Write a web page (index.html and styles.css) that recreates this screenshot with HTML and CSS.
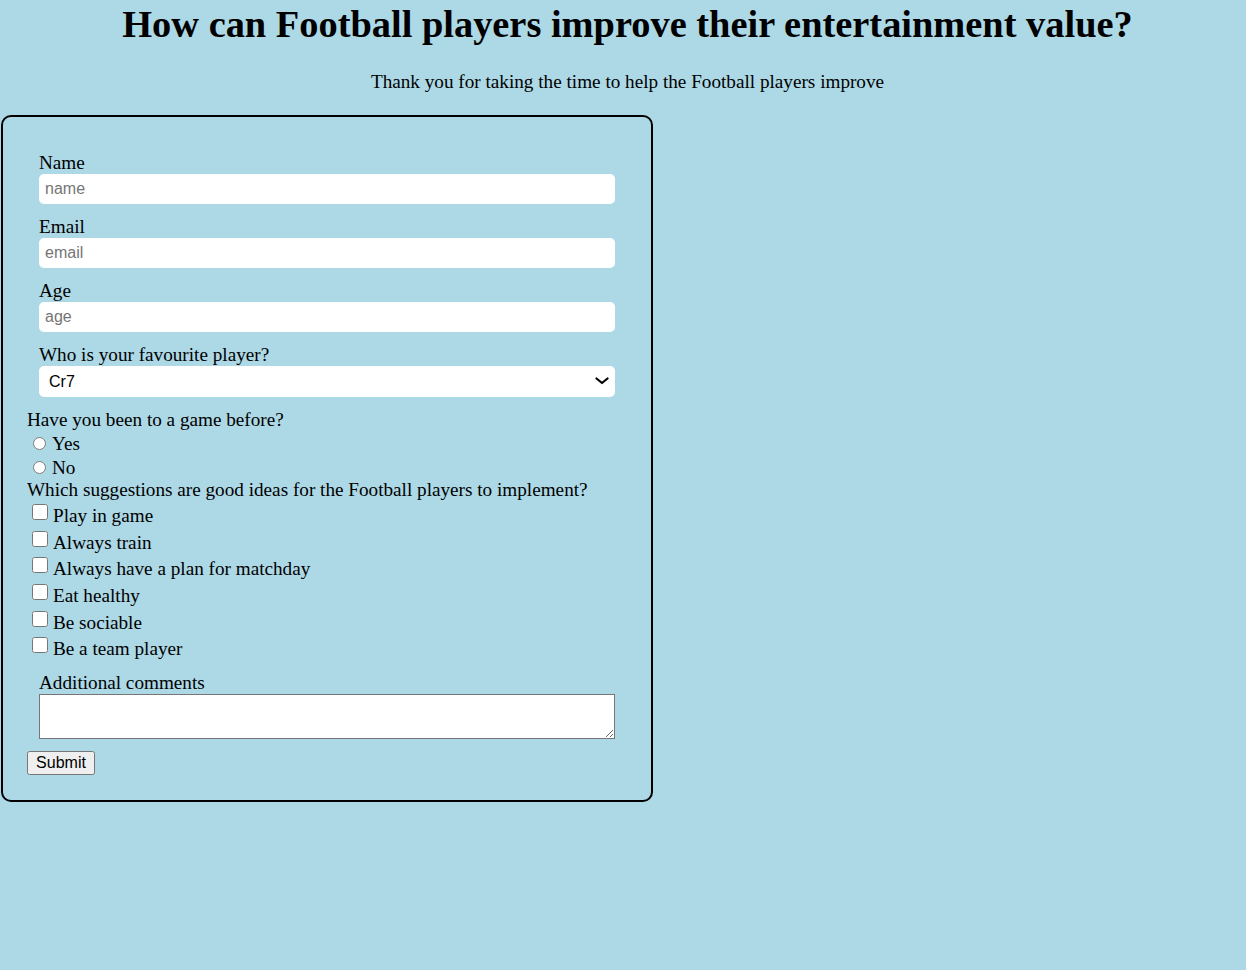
FILE: index.html
```html
<!DOCTYPE html>
<html>
<head>
<meta charset="utf-8">
<link rel="stylesheet" href="styles.css">
</head>
<body>
<h1 class="title">How can Football players improve their entertainment value?</h1>
<p class="intro">Thank you for taking the time to help the Football players improve</p>
<form class="survey">
  <div class="field">
    <label class="field-label" for="name">Name</label>
    <input class="text-input" id="name" type="text" placeholder="name">
  </div>
  <div class="field">
    <label class="field-label" for="email">Email</label>
    <input class="text-input" id="email" type="email" placeholder="email">
  </div>
  <div class="field">
    <label class="field-label" for="age">Age</label>
    <input class="text-input" id="age" type="number" placeholder="age">
  </div>
  <div class="field">
    <label class="field-label" for="player">Who is your favourite player?</label>
    <div class="select-wrap">
      <select class="select-input" id="player">
        <option>Cr7</option>
        <option>Messi</option>
      </select>
      <svg class="chevron" width="14" height="8" viewBox="0 0 14 8"><path d="M1.5 1.5 L7 6 L12.5 1.5" fill="none" stroke="#000" stroke-width="2.2" stroke-linecap="round" stroke-linejoin="round"/></svg>
    </div>
  </div>
  <div class="question">Have you been to a game before?</div>
  <div class="radio-row"><input class="radio" type="radio" name="game" id="yes"><label for="yes">Yes</label></div>
  <div class="radio-row"><input class="radio" type="radio" name="game" id="no"><label for="no">No</label></div>
  <div class="question">Which suggestions are good ideas for the Football players to implement?</div>
  <div class="checks">
    <div class="check-row"><input class="check" type="checkbox" id="c1"><label for="c1">Play in game</label></div>
    <div class="check-row"><input class="check" type="checkbox" id="c2"><label for="c2">Always train</label></div>
    <div class="check-row"><input class="check" type="checkbox" id="c3"><label for="c3">Always have a plan for matchday</label></div>
    <div class="check-row"><input class="check" type="checkbox" id="c4"><label for="c4">Eat healthy</label></div>
    <div class="check-row"><input class="check" type="checkbox" id="c5"><label for="c5">Be sociable</label></div>
    <div class="check-row"><input class="check" type="checkbox" id="c6"><label for="c6">Be a team player</label></div>
  </div>
  <div class="field comments">
    <label class="field-label" for="comments">Additional comments</label>
    <textarea class="textarea" id="comments"></textarea>
  </div>
  <button class="submit" type="submit">Submit</button>
</form>
</body>
</html>
```
FILE: styles.css
```css
html, body {
  margin: 0;
  padding: 0;
}
body {
  background: #add8e6;
  font-family: "Liberation Serif", "Times New Roman", serif;
  font-size: 19.2px;
  line-height: 22px;
  color: #000;
}
.title {
  margin: 0;
  padding: 2px 0 0 9px;
  text-align: center;
  font-size: 38.4px;
  line-height: 44px;
  font-weight: bold;
}
.intro {
  text-align: center;
  margin: 25px 0 22px;
  padding-left: 9px;
  line-height: 22px;
}
.survey {
  box-sizing: border-box;
  width: 652px;
  margin: 0 0 0 1px;
  border: 2px solid #000;
  border-radius: 10px;
  padding: 35px 24px 25px 24px;
}
.field {
  padding-left: 12px;
  margin-bottom: 12px;
  display: flex;
  flex-direction: column;
  align-items: flex-start;
}
.field-label {
  line-height: 22px;
}
.text-input, .select-input {
  width: 576px;
  height: 30px;
  box-sizing: border-box;
  border: none;
  border-radius: 5px;
  background: #fff;
  font-family: "Liberation Sans", Arial, sans-serif;
  font-size: 16px;
  padding: 0 6px;
  color: #000;
}
.text-input::placeholder {
  color: #757575;
}
.select-wrap {
  position: relative;
  width: 576px;
  height: 31px;
}
.select-input {
  -webkit-appearance: none;
  appearance: none;
  height: 31px;
  padding: 0 10px;
  display: block;
}
.chevron {
  position: absolute;
  right: 6px;
  top: 11px;
  pointer-events: none;
}
.question {
  line-height: 22px;
}
.radio-row {
  display: flex;
  align-items: center;
  height: 24px;
  box-sizing: border-box;
  padding-top: 2px;
  padding-left: 6px;
}
.radio {
  margin: 0 6px 2px 0;
  width: 13px;
  height: 13px;
}
.checks {
  padding-top: 2px;
}
.check-row {
  display: flex;
  align-items: center;
  height: 26.6px;
  padding-left: 4.7px;
}
.check {
  margin: 0 5.3px 8px 0;
  width: 16px;
  height: 16px;
}
.comments {
  margin-top: 9.4px;
}
.textarea {
  width: 576px;
  height: 45px;
  box-sizing: border-box;
  border: 1px solid #767676;
  display: block;
}
.submit {
  font-family: "Liberation Sans", Arial, sans-serif;
  font-size: 16px;
  padding: 1px 7px;
  height: 24.5px;
  width: 68px;
  display: block;
}
```
